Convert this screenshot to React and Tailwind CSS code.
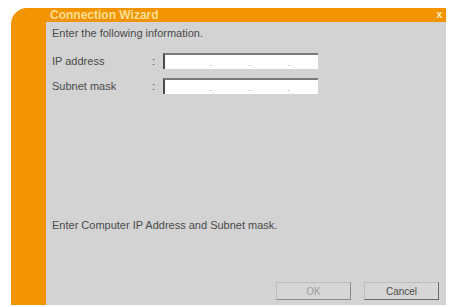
export default function App() {
  const font = { fontFamily: '"Liberation Sans", Arial, sans-serif' };

  const IpField = () => (
    <div className="flex h-[16px] w-[155px] items-end border-t-2 border-l-2 border-t-[#7a7a7a] border-l-[#4a4a4a] bg-white">
      <div className="flex w-full justify-around pl-[26px] pr-[10px] pb-[1px] text-[8px] leading-none text-[#777]">
        <span>.</span>
        <span>.</span>
        <span>.</span>
      </div>
    </div>
  );

  return (
    <div className="h-[307px] w-[451px] bg-white pl-[11px] pt-[8px]" style={font}>
      <div className="flex h-[297px] w-[435px] flex-col rounded-tl-[16px] bg-[#f29300] pl-[35px]">
        <div className="flex h-[14px] items-center justify-between pl-[4px] pr-[4px]">
          <span className="text-[12px] font-bold leading-none text-[#ffdf94]">Connection Wizard</span>
          <span className="text-[10px] font-bold leading-none text-[#fff3c8]">x</span>
        </div>
        <div className="flex flex-1 flex-col bg-[#d3d3d3] pl-[6px] pr-[4px] text-[11px] text-[#4a4a4a]">
          <div className="mt-[5px] leading-[12px]">Enter the following information.</div>
          <div className="mt-[14px] flex items-center">
            <span className="w-[100px]">IP address</span>
            <span className="w-[11px]">:</span>
            <IpField />
          </div>
          <div className="mt-[8px] flex items-center">
            <span className="w-[100px]">Subnet mask</span>
            <span className="w-[11px]">:</span>
            <IpField />
          </div>
          <div className="mt-[125px] leading-[12px]">Enter Computer IP Address and Subnet mask.</div>
          <div className="mt-auto mb-[5px] flex justify-end gap-[13px] pr-[3px]">
            <button className="h-[18px] w-[75px] border border-[#bdbdbd] border-r-[#8a8a8a] border-b-[#8a8a8a] bg-[#d6d6d6] text-[10px] text-[#a0a0a0]">
              OK
            </button>
            <button className="h-[18px] w-[75px] border border-[#bdbdbd] border-r-[#6a6a6a] border-b-[#6a6a6a] bg-[#d6d6d6] text-[10px] text-[#4a4a4a]">
              Cancel
            </button>
          </div>
        </div>
      </div>
    </div>
  );
}
